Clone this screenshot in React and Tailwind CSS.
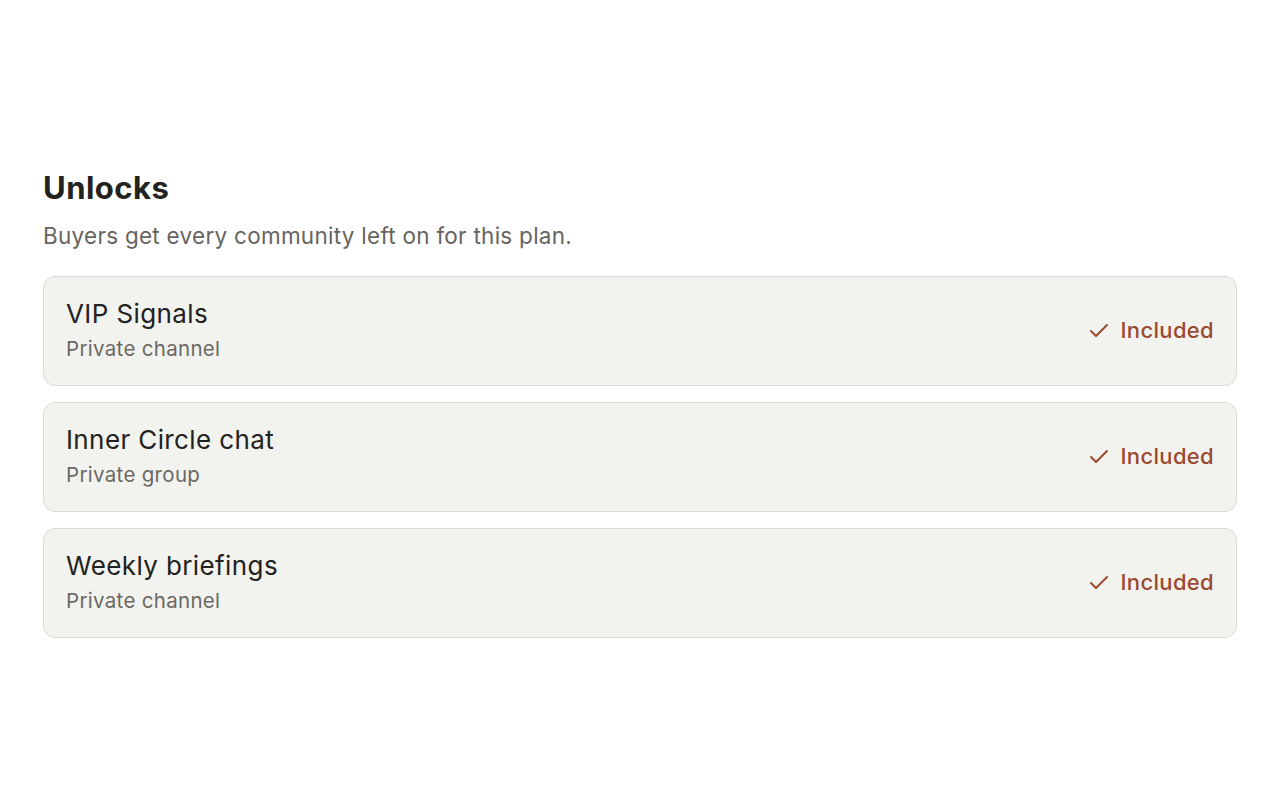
import React from 'react';
import { Check } from 'lucide-react';

const communities = [
  { name: 'VIP Signals', kind: 'Private channel' },
  { name: 'Inner Circle chat', kind: 'Private group' },
  { name: 'Weekly briefings', kind: 'Private channel' },
];

export default function App() {
  return (
    <div className="min-h-[800px] bg-white px-[43px] pt-[170px] text-[#1f1f1d]" style={{ fontFamily: 'Inter, "Noto Sans", sans-serif' }}>
      <h2 className="text-[31px] font-bold leading-[36px] tracking-[0.015em] text-[#222220]">Unlocks</h2>
      <p className="mt-[15px] text-[22.5px] leading-[30px] tracking-[0.012em] text-[#66645f]">Buyers get every community left on for this plan.</p>

      <div className="mt-[25px] flex flex-col gap-4">
        {communities.map(c => (
          <div key={c.name} className="flex items-center justify-between rounded-xl border border-[#dcdbd6] bg-[#f2f2ee] px-[22px] pt-[21px] pb-[22px]">
            <div>
              <div className="text-[26px] leading-[32px] tracking-[0.015em] text-[#222220]">{c.name}</div>
              <div className="mt-[5px] text-[20.5px] leading-[28px] tracking-[0.015em] text-[#6b6964]">{c.kind}</div>
            </div>
            <div className="flex items-center gap-[10px] text-[22px] font-medium tracking-[0.015em] text-[#9a4a2f]">
              <Check size={24} strokeWidth={2} />
              <span>Included</span>
            </div>
          </div>
        ))}
      </div>
    </div>
  );
}
